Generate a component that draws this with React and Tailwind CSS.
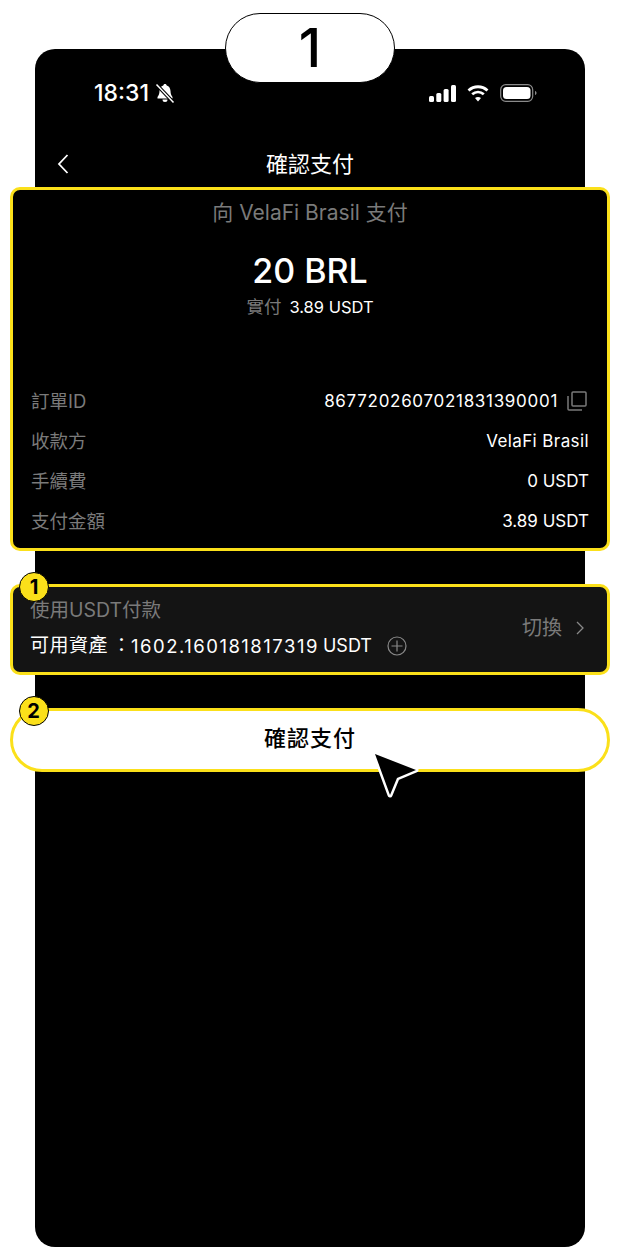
const font = { fontFamily: 'Inter, "Noto Sans CJK TC", sans-serif' };

function Row({ label, children }) {
  return (
    <div className="flex items-center justify-between h-[40px]">
      <span className="text-[18.5px] text-[#7a7a7a]">{label}</span>
      {children}
    </div>
  );
}

function Step({ n }) {
  return (
    <div className="absolute -top-[15px] left-[6px] w-[30px] h-[30px] rounded-full bg-[#fbe01a] border border-black flex items-center justify-center text-[20px] font-bold text-black">
      {n}
    </div>
  );
}

export default function App() {
  return (
    <div className="w-[620px] h-[1260px] bg-white pt-[49px] px-[35px]" style={font}>
      <div className="relative h-[1198px] bg-black rounded-[20px]">
        {/* step pill */}
        <div className="absolute -top-[36px] left-[190px] w-[170px] h-[70px] bg-white border border-black rounded-[35px] flex items-center justify-center text-[54px] font-medium leading-none text-black">
          1
        </div>

        {/* status bar */}
        <div className="flex items-center justify-between pt-[30px] pl-[59px] pr-[48px] h-[58px] text-white">
          <div className="flex items-center gap-[5px]">
            <span className="text-[23px] font-medium leading-none">18:31</span>
            <svg width="22" height="22" viewBox="0 0 22 22" fill="white">
              <path d="M11 2c-1 0-1.600.7-1.700 1.500C6.800 4.300 5.600 6.400 5.500 9c-.1 3-.8 4.500-2 6v1.500h15V15c-1.200-1.500-1.900-3-2-6-.1-2.600-1.300-4.700-3.800-5.500C12.600 2.700 12 2 11 2z" />
              <path d="M8.500 17.500h5a2.500 2.500 0 0 1-5 0z" />
              <path d="M3 3l16 17" stroke="black" strokeWidth="3.500" />
              <path d="M2.500 2.500l17 18" stroke="white" strokeWidth="1.500" />
            </svg>
          </div>
          <div className="flex items-center gap-[11px]">
            <svg width="27" height="18" viewBox="0 0 27 18" fill="white">
              <rect x="0" y="12" width="5" height="6" rx="1.500" />
              <rect x="7.300" y="9" width="5" height="9" rx="1.500" />
              <rect x="14.600" y="5" width="5" height="13" rx="1.500" />
              <rect x="22" y="1" width="5" height="17" rx="1.500" />
            </svg>
            <svg width="22" height="17" viewBox="0 0 22 17" fill="none" stroke="white" strokeWidth="2.800">
              <path d="M1.500 5.500c5.500-5 13.500-5 19 0" />
              <path d="M5.200 9.300c3.500-3 8.100-3 11.600 0" />
              <path d="M11 16.500l-3-3.600c1.800-1.200 4.200-1.200 6 0z" fill="white" stroke="none" />
            </svg>
            <svg width="37" height="18" viewBox="0 0 37 18" fill="none">
              <rect x="0.700" y="0.700" width="32" height="16.600" rx="5" stroke="#8a8a8a" strokeWidth="1.200" />
              <rect x="3" y="3" width="27.500" height="12" rx="3.500" fill="white" />
              <path d="M35 7v4c1-.3 1.500-1 1.500-2S36 7.300 35 7z" fill="#8a8a8a" />
            </svg>
          </div>
        </div>

        {/* nav */}
        <div className="relative flex items-center justify-center h-[40px] mt-[37px] text-white text-[22px]">
          <svg width="14" height="22" viewBox="0 0 14 22" fill="none" stroke="white" strokeWidth="1.800" className="absolute left-[21px] top-[9px]">
            <path d="M11.500 2L3 11l8.500 9" />
          </svg>
          確認支付
        </div>

        {/* order card */}
        <div className="-mx-[25px] mt-[3px] h-[364px] bg-black border-[3px] border-[#fbe01a] rounded-[10px] px-[18px]">
          <p className="text-center text-[21px] leading-[30px] mt-[8px] text-[#7a7a7a]">向 VelaFi Brasil 支付</p>
          <p className="text-center text-white text-[34px] leading-[40px] mt-[23px] font-medium">20 BRL</p>
          <p className="flex justify-center items-center gap-[8px] mt-[4px] leading-[24px]">
            <span className="text-[17.5px] text-[#7a7a7a]">實付</span>
            <span className="text-[16.500px] text-white">3.89 USDT</span>
          </p>
          <div className="mt-[63px]">
            <Row label="訂單ID">
              <div className="flex items-center gap-[9px] text-white text-[17px] tracking-[0.7px]">
                8677202607021831390001
                <svg width="20" height="20" viewBox="0 0 20 20" fill="none" stroke="#7a7a7a" strokeWidth="1.500" className="mr-[2px] -mt-[2px]">
                  <rect x="5" y="1" width="14" height="14" rx="1" />
                  <path d="M1 5v13a1 1 0 0 0 1 1h13" />
                </svg>
              </div>
            </Row>
            <Row label="收款方"><span className="text-white text-[17px] tracking-[0.4px]">VelaFi Brasil</span></Row>
            <Row label="手續費"><span className="text-white text-[17px]">0 USDT</span></Row>
            <Row label="支付金額"><span className="text-white text-[17px]">3.89 USDT</span></Row>
          </div>
        </div>

        {/* pay method */}
        <div className="relative -mx-[25px] mt-[33px] h-[91px] bg-[#141414] border-[3px] border-[#fbe01a] rounded-[10px] pl-[17px] pr-[23px] pb-[3px] flex items-center justify-between">
          <Step n="1" />
          <div>
            <p className="text-[19.5px] leading-[24px] text-[#7a7a7a] -mt-[1px]">使用USDT付款</p>
            <div className="flex items-center mt-[12px] text-white text-[19px] leading-[24px]">
              <span className="tracking-[0.5px]">可用資產</span>
              <span className="ml-[4px]">：</span>
              <span className="text-[18.5px] tracking-[1.5px]">1602.160181817319</span>
              <span className="text-[18px] ml-[4px]">USDT</span>
              <svg width="20" height="20" viewBox="0 0 20 20" fill="none" stroke="#888888" strokeWidth="1.200" className="ml-[15px]">
                <circle cx="10" cy="10" r="9" />
                <path d="M10 4.500v11M4.500 10h11" />
              </svg>
            </div>
          </div>
          <div className="flex items-center gap-[14px] text-[#7a7a7a] text-[20px]">
            切換
            <svg width="8" height="14" viewBox="0 0 8 14" fill="none" stroke="#888888" strokeWidth="1.300">
              <path d="M1 1l6 6-6 6" />
            </svg>
          </div>
        </div>

        {/* confirm */}
        <div className="relative -mx-[25px] mt-[33px] h-[64px] bg-white border-[3px] border-[#fbe01a] rounded-full pb-[4px] flex items-center justify-center text-[22px] font-medium text-black tracking-[1px]">
          <Step n="2" />
          確認支付
          <svg width="54" height="54" viewBox="0 0 54 54" className="absolute left-[357px] top-[39px]">
            <path d="M5 4L46 20L27 28L20 45Z" fill="black" stroke="white" strokeWidth="5" strokeLinejoin="round" paintOrder="stroke" />
          </svg>
        </div>
      </div>
    </div>
  );
}
